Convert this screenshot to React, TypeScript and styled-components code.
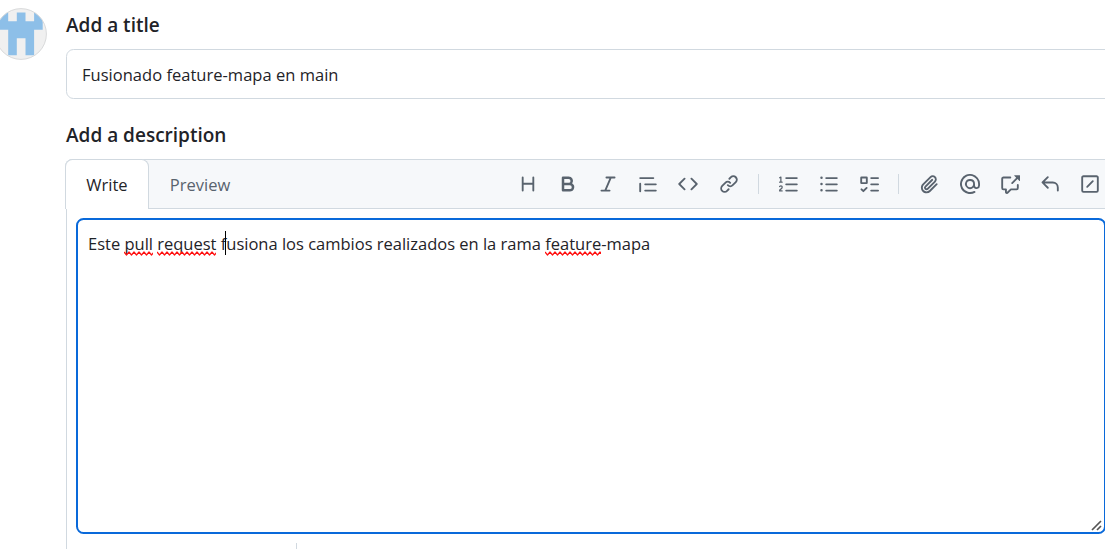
import React from 'react';
import styled, { createGlobalStyle } from 'styled-components';

const GlobalStyle = createGlobalStyle`
  * { box-sizing: border-box; }
  html, body { margin: 0; background: #fff; overflow: hidden; }
  body { font-family: 'Segoe UI', 'Open Sans', 'Noto Sans', sans-serif; color: #1f2328; }
`;

const Page = styled.main`
  display: flex;
  width: 1105px;
  height: 549px;
  overflow: hidden;
  background: #fff;
`;

const AvatarColumn = styled.aside`
  flex: 0 0 66px;
  padding-top: 8px;
`;

const Avatar = styled.svg`
  display: block;
  width: 52px;
  height: 52px;
  margin-left: -5px;
`;

const Form = styled.form`
  flex: 0 0 1050px;
  display: flex;
  flex-direction: column;
  padding-top: 10px;
`;

const Label = styled.div`
  height: 30px;
  line-height: 30px;
  font-size: 19px;
  font-weight: 600;
  white-space: nowrap;
`;

const TitleField = styled.div`
  height: 50px;
  margin: 9px 0 21px;
  padding: 0 15px;
  border: 1px solid #d1d9e0;
  border-radius: 7.5px;
  font-size: 16.5px;
  line-height: 50px;
  letter-spacing: 0.02px;
`;

const Editor = styled.section`
  flex: 1;
  display: flex;
  flex-direction: column;
  margin-top: 9px;
  border: 1px solid #d1d9e0;
  border-bottom: 0;
  border-radius: 7.5px 7.5px 0 0;
`;

const EditorHeader = styled.header`
  display: flex;
  height: 50px;
  margin-left: -2px;
  margin-top: -1px;
  background: #f6f8fa;
  border-top: 1px solid #d1d9e0;
  border-radius: 7.5px 7.5px 0 0;
  box-shadow: inset 0 -1px #d1d9e0;
`;

const Tab = styled.button<{ $active?: boolean; $width: number }>`
  width: ${(p) => p.$width}px;
  height: 50px;
  margin-top: -1px;
  padding: 0;
  border: 1px solid ${(p) => (p.$active ? '#d1d9e0' : 'transparent')};
  border-bottom: 0;
  border-radius: 7.5px 7.5px 0 0;
  background: ${(p) => (p.$active ? '#fff' : 'transparent')};
  color: ${(p) => (p.$active ? '#1f2328' : '#59636e')};
  font-family: inherit;
  font-size: 16.5px;
`;

const Toolbar = styled.div`
  display: flex;
  align-items: center;
  height: 48px;
  margin-left: 257px;
`;

const ToolButton = styled.button`
  display: flex;
  align-items: center;
  justify-content: center;
  flex: 0 0 40.1px;
  height: 40px;
  padding: 0;
  border: 0;
  background: none;
  color: #59636e;
`;

const Divider = styled.span`
  flex: 0 0 1px;
  height: 20px;
  margin: 0 10px 0 9.3px;
  background: #d1d9e0;
`;

const TextBox = styled.div`
  position: relative;
  width: 1030px;
  height: 316px;
  margin: 9px 0 0 9px;
  padding: 9px 10px;
  border: 2px solid #0969da;
  border-radius: 7.5px;
  font-size: 16.5px;
  line-height: 30px;
  letter-spacing: -0.005px;
  white-space: nowrap;
`;

const Word = styled.span`
  position: relative;
`;

const Squiggle = styled.svg`
  position: absolute;
  left: 0;
  bottom: -1px;
  width: 100%;
  height: 5px;
`;

const Caret = styled.i`
  position: absolute;
  left: 147px;
  top: 11px;
  width: 1px;
  height: 24px;
  background: #000;
`;

const ResizeGrip = styled.svg`
  position: absolute;
  right: 2px;
  bottom: 1px;
  width: 11px;
  height: 11px;
`;

const EditorFooter = styled.footer`
  display: flex;
  height: 15px;
  padding: 9px 0 0 229px;
`;

const FooterDivider = styled.span`
  width: 1px;
  background: #d1d9e0;
`;

const icons = {
  heading: 'M3.75 2a.75.75 0 0 1 .75.75V7h7V2.75a.75.75 0 0 1 1.5 0v10.5a.75.75 0 0 1-1.5 0V8.5h-7v4.75a.75.75 0 0 1-1.5 0V2.75A.75.75 0 0 1 3.75 2Z',
  bold: 'M4 2h4.5a3.501 3.501 0 0 1 2.852 5.53A3.499 3.499 0 0 1 9.5 14H4a1 1 0 0 1-1-1V3a1 1 0 0 1 1-1Zm1 7v3h4.5a1.5 1.5 0 0 0 0-3Zm3.5-2a1.5 1.5 0 0 0 0-3H5v3Z',
  italic: 'M6 2.75A.75.75 0 0 1 6.75 2h6.5a.75.75 0 0 1 0 1.5h-2.505l-3.858 9H9.25a.75.75 0 0 1 0 1.5h-6.5a.75.75 0 0 1 0-1.5h2.505l3.858-9H6.75A.75.75 0 0 1 6 2.75Z',
  quote: 'M1.75 2.5h10.5a.75.75 0 0 1 0 1.5H1.75a.75.75 0 0 1 0-1.5Zm4 5h8.5a.75.75 0 0 1 0 1.5h-8.5a.75.75 0 0 1 0-1.5Zm0 5h8.5a.75.75 0 0 1 0 1.5h-8.5a.75.75 0 0 1 0-1.5ZM2.5 7.75v6a.75.75 0 0 1-1.5 0v-6a.75.75 0 0 1 1.5 0Z',
  code: 'm11.28 3.22 4.25 4.25a.75.75 0 0 1 0 1.06l-4.25 4.25a.749.749 0 0 1-1.275-.326.749.749 0 0 1 .215-.734L13.94 8l-3.72-3.72a.749.749 0 0 1 .326-1.275.749.749 0 0 1 .734.215Zm-6.56 0a.751.751 0 0 1 1.042.018.751.751 0 0 1 .018 1.042L2.06 8l3.72 3.72a.749.749 0 0 1-.326 1.275.749.749 0 0 1-.734-.215L.47 8.53a.75.75 0 0 1 0-1.06Z',
  link: 'm7.775 3.275 1.25-1.25a3.5 3.5 0 1 1 4.95 4.95l-2.5 2.5a3.5 3.5 0 0 1-4.95 0 .751.751 0 0 1 .018-1.042.751.751 0 0 1 1.042-.018 1.998 1.998 0 0 0 2.83 0l2.5-2.5a2.002 2.002 0 0 0-2.83-2.83l-1.25 1.25a.751.751 0 0 1-1.042-.018.751.751 0 0 1-.018-1.042Zm-4.69 9.64a1.998 1.998 0 0 0 2.83 0l1.25-1.25a.751.751 0 0 1 1.042.018.751.751 0 0 1 .018 1.042l-1.25 1.25a3.5 3.5 0 1 1-4.95-4.95l2.5-2.5a3.5 3.5 0 0 1 4.95 0 .751.751 0 0 1-.018 1.042.751.751 0 0 1-1.042.018 1.998 1.998 0 0 0-2.83 0l-2.5 2.5a1.998 1.998 0 0 0 0 2.83Z',
  ordered: 'M5 3.25a.75.75 0 0 1 .75-.75h8.5a.75.75 0 0 1 0 1.5h-8.5A.75.75 0 0 1 5 3.25Zm0 5a.75.75 0 0 1 .75-.75h8.5a.75.75 0 0 1 0 1.5h-8.5A.75.75 0 0 1 5 8.25Zm0 5a.75.75 0 0 1 .75-.75h8.5a.75.75 0 0 1 0 1.5h-8.5a.75.75 0 0 1-.75-.75ZM.924 10.32a.5.5 0 0 1-.851-.525l.001-.001.001-.002.002-.004.007-.011c.097-.144.215-.273.348-.384.228-.19.588-.392 1.068-.392.468 0 .858.181 1.126.484.259.294.377.673.377 1.038 0 .987-.686 1.495-1.156 1.845l-.047.035c-.303.225-.522.4-.654.597h1.357a.5.5 0 0 1 0 1H.5a.5.5 0 0 1-.5-.5c0-1.005.692-1.52 1.167-1.875l.035-.025c.531-.396.8-.625.8-1.078a.57.57 0 0 0-.128-.376C1.806 10.068 1.695 10 1.5 10a.658.658 0 0 0-.429.163.835.835 0 0 0-.144.153ZM2.003 2.5V6h.503a.5.5 0 0 1 0 1H.5a.5.5 0 0 1 0-1h.503V3.308l-.28.14a.5.5 0 0 1-.446-.895l1.003-.5a.5.5 0 0 1 .723.447Z',
  unordered: 'M5.75 2.5h8.5a.75.75 0 0 1 0 1.5h-8.5a.75.75 0 0 1 0-1.5Zm0 5h8.5a.75.75 0 0 1 0 1.5h-8.5a.75.75 0 0 1 0-1.5Zm0 5h8.5a.75.75 0 0 1 0 1.5h-8.5a.75.75 0 0 1 0-1.5ZM2 14a1 1 0 1 1 0-2 1 1 0 0 1 0 2Zm1-6a1 1 0 1 1-2 0 1 1 0 0 1 2 0ZM2 4a1 1 0 1 1 0-2 1 1 0 0 1 0 2Z',
  tasklist: 'M2 2h4a1 1 0 0 1 1 1v4a1 1 0 0 1-1 1H2a1 1 0 0 1-1-1V3a1 1 0 0 1 1-1Zm4.655 8.595a.75.75 0 0 1 0 1.06L4.03 14.28a.75.75 0 0 1-1.06 0l-1.5-1.5a.749.749 0 0 1 .326-1.275.749.749 0 0 1 .734.215l.97.97 2.095-2.095a.75.75 0 0 1 1.06 0ZM9.75 2.5h5.5a.75.75 0 0 1 0 1.5h-5.5a.75.75 0 0 1 0-1.5Zm0 5h5.5a.75.75 0 0 1 0 1.5h-5.5a.75.75 0 0 1 0-1.5Zm0 5h5.5a.75.75 0 0 1 0 1.5h-5.5a.75.75 0 0 1 0-1.5Zm-7.25-9v3h3v-3Z',
  paperclip: 'M12.212 3.02a1.753 1.753 0 0 0-2.478.003l-5.83 5.83a3.007 3.007 0 0 0-.88 2.127c0 .795.315 1.551.88 2.116.567.567 1.333.89 2.126.89.79 0 1.548-.321 2.116-.89l5.48-5.48a.75.75 0 0 1 1.061 1.06l-5.48 5.48a4.492 4.492 0 0 1-3.177 1.33c-1.2 0-2.345-.487-3.187-1.33a4.483 4.483 0 0 1-1.32-3.177c0-1.195.475-2.341 1.32-3.186l5.83-5.83a3.25 3.25 0 0 1 5.553 2.297c0 .863-.343 1.691-.953 2.301L7.439 12.39c-.375.377-.884.59-1.416.593a1.998 1.998 0 0 1-1.412-.593 1.992 1.992 0 0 1 0-2.828l5.48-5.48a.751.751 0 0 1 1.042.018.751.751 0 0 1 .018 1.042l-5.48 5.48a.492.492 0 0 0 0 .707.499.499 0 0 0 .352.154.51.51 0 0 0 .356-.154l5.833-5.827a1.755 1.755 0 0 0 0-2.481Z',
  mention: 'M4.75 2.37a6.501 6.501 0 0 0 6.5 11.26.75.75 0 0 1 .75 1.298A7.999 7.999 0 0 1 .989 4.148 8 8 0 0 1 16 7.75v1.5a2.75 2.75 0 0 1-5.072 1.475 3.999 3.999 0 0 1-6.65-4.19A4 4 0 0 1 12 8v1.25a1.25 1.25 0 0 0 2.5 0V7.867a6.5 6.5 0 0 0-9.75-5.496ZM10.5 8a2.5 2.5 0 1 0-5 0 2.5 2.5 0 0 0 5 0Z',
  reference: 'M2.75 3.5a.25.25 0 0 0-.25.25v7.5c0 .138.112.25.25.25h2a.75.75 0 0 1 .75.75v2.19l2.72-2.72a.749.749 0 0 1 .53-.22h4.5a.25.25 0 0 0 .25-.25v-2.5a.75.75 0 0 1 1.5 0v2.5A1.75 1.75 0 0 1 13.25 13H9.06l-2.573 2.573A1.458 1.458 0 0 1 4 14.543V13H2.75A1.75 1.75 0 0 1 1 11.25v-7.5C1 2.784 1.784 2 2.75 2h5.5a.75.75 0 0 1 0 1.5ZM16 1.25v4.146a.25.25 0 0 1-.427.177L14.03 4.03l-3.75 3.75a.749.749 0 0 1-1.275-.326.749.749 0 0 1 .215-.734l3.75-3.75-1.543-1.543A.25.25 0 0 1 11.604 1h4.146a.25.25 0 0 1 .25.25Z',
  reply: 'M6.78 1.97a.75.75 0 0 1 0 1.06L3.81 6h6.44A4.75 4.75 0 0 1 15 10.75v2.5a.75.75 0 0 1-1.5 0v-2.5a3.25 3.25 0 0 0-3.25-3.25H3.81l2.97 2.97a.749.749 0 0 1-.326 1.275.749.749 0 0 1-.734-.215L1.47 7.28a.75.75 0 0 1 0-1.06l4.25-4.25a.75.75 0 0 1 1.06 0Z',
  slash: 'M13.25 1c.966 0 1.75.784 1.75 1.75v10.5A1.75 1.75 0 0 1 13.25 15H2.75A1.75 1.75 0 0 1 1 13.25V2.75C1 1.784 1.784 1 2.75 1ZM2.75 2.5a.25.25 0 0 0-.25.25v10.5c0 .138.112.25.25.25h10.5a.25.25 0 0 0 .25-.25V2.75a.25.25 0 0 0-.25-.25Zm8.03 3.78-4.5 4.5a.751.751 0 0 1-1.042-.018.751.751 0 0 1-.018-1.042l4.5-4.5a.751.751 0 0 1 1.042.018.751.751 0 0 1 .018 1.042Z',
};

type IconName = keyof typeof icons;

const groups: IconName[][] = [
  ['heading', 'bold', 'italic', 'quote', 'code', 'link'],
  ['ordered', 'unordered', 'tasklist'],
  ['paperclip', 'mention', 'reference', 'reply', 'slash'],
];

const Icon = ({ name }: { name: IconName }) => (
  <svg width="20" height="20" viewBox="0 0 16 16" fill="currentColor" aria-hidden="true">
    <path d={icons[name]} />
  </svg>
);

const wave = 'M0 1' + 'l2.5 3l2.5-3'.repeat(16);

const Misspelled = ({ children }: { children: React.ReactNode }) => (
  <Word>
    {children}
    <Squiggle aria-hidden="true">
      <path d={wave} fill="none" stroke="#f11" strokeWidth="1.2" strokeLinejoin="round" />
    </Squiggle>
  </Word>
);

export default function App() {
  return (
    <>
      <GlobalStyle />
      <Page>
        <AvatarColumn>
          <Avatar viewBox="0 0 52 52">
            <defs>
              <clipPath id="avatar-circle">
                <circle cx="26" cy="26" r="25.5" />
              </clipPath>
            </defs>
            <g clipPath="url(#avatar-circle)">
              <rect width="52" height="52" fill="#f0f0f0" />
              <path
                d="M4.5 4.5h8.7v8.7h8.6V4.5h8.7v8.7h8.6V4.5h8.6v17.3h-8.6v25.4h-8.6V30.3h-8.7v16.9h-8.6V21.8H4.5Z"
                fill="#8dbfe8"
              />
            </g>
            <circle cx="26" cy="26" r="25.4" fill="none" stroke="#d9dadb" />
          </Avatar>
        </AvatarColumn>
        <Form>
          <Label>Add a title</Label>
          <TitleField>Fusionado feature-mapa en main</TitleField>
          <Label>Add a description</Label>
          <Editor>
            <EditorHeader>
              <Tab type="button" $active $width={84}>Write</Tab>
              <Tab type="button" $width={102}>Preview</Tab>
              <Toolbar>
                {groups.map((group, index) => (
                  <React.Fragment key={group[0]}>
                    {index > 0 && <Divider />}
                    {group.map((name) => (
                      <ToolButton key={name} type="button" aria-label={name}>
                        <Icon name={name} />
                      </ToolButton>
                    ))}
                  </React.Fragment>
                ))}
              </Toolbar>
            </EditorHeader>
            <TextBox>
              Este <Misspelled>pull</Misspelled> <Misspelled>request</Misspelled> fusiona los cambios
              realizados en la rama <Misspelled>feature</Misspelled>-mapa
              <Caret />
              <ResizeGrip viewBox="0 0 11 11">
                <path d="M1 10 10 1M6 10l4-4" stroke="#555" strokeWidth="1.7" fill="none" />
              </ResizeGrip>
            </TextBox>
            <EditorFooter>
              <FooterDivider />
            </EditorFooter>
          </Editor>
        </Form>
      </Page>
    </>
  );
}
